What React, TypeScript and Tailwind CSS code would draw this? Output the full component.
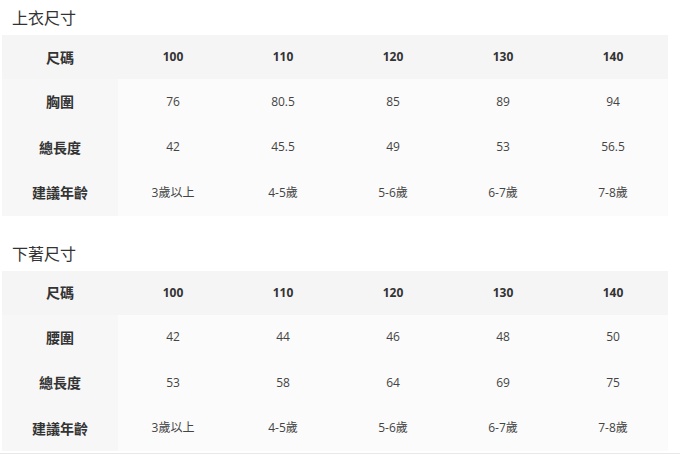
import React from 'react';

type SizeTable = {
    title: string;
    rows: { label: string; values: string[] }[];
};

const sizes = ['100', '110', '120', '130', '140'];

const tables: SizeTable[] = [
    {
        title: '上衣尺寸',
        rows: [
            { label: '胸圍', values: ['76', '80.5', '85', '89', '94'] },
            { label: '總長度', values: ['42', '45.5', '49', '53', '56.5'] },
            { label: '建議年齡', values: ['3歲以上', '4-5歲', '5-6歲', '6-7歲', '7-8歲'] },
        ],
    },
    {
        title: '下著尺寸',
        rows: [
            { label: '腰圍', values: ['42', '44', '46', '48', '50'] },
            { label: '總長度', values: ['53', '58', '64', '69', '75'] },
            { label: '建議年齡', values: ['3歲以上', '4-5歲', '5-6歲', '6-7歲', '7-8歲'] },
        ],
    },
];

const Table: React.FC<{ table: SizeTable }> = ({ table }) => (
    <section>
        <h2 className="h-[35px] pl-[12px] pt-[6px] text-[16px] leading-[24px] text-[#333]">{table.title}</h2>
        <div className="ml-[2px] w-[666px] grid grid-cols-[116px_repeat(5,110px)] bg-[#fbfbfb] text-[#444]">
            <div className="h-[44px] flex items-center justify-center bg-[#f5f5f5] text-[14px] font-bold text-[#333]">尺碼</div>
            {sizes.map(s => (
                <div key={s} className="h-[44px] flex items-center justify-center bg-[#f5f5f5] text-[12px] font-bold text-[#333]">{s}</div>
            ))}
            {table.rows.map(row => (
                <React.Fragment key={row.label}>
                    <div className="h-[45.5px] flex items-center justify-center bg-[#f7f7f7] text-[14px] font-bold text-[#333]">{row.label}</div>
                    {row.values.map((v, i) => (
                        <div key={i} className="h-[45.5px] flex items-center justify-center text-[12px]">{v}</div>
                    ))}
                </React.Fragment>
            ))}
        </div>
    </section>
);

export default function App() {
    return (
        <div className="w-[680px] h-[456px] overflow-hidden bg-white font-['Open_Sans','Noto_Sans_CJK_TC',sans-serif]">
            <Table table={tables[0]} />
            <div className="h-[20px]" />
            <Table table={tables[1]} />
            <div className="mt-[2px] h-px w-[680px] bg-[#e8e8e8]" />
        </div>
    );
}
